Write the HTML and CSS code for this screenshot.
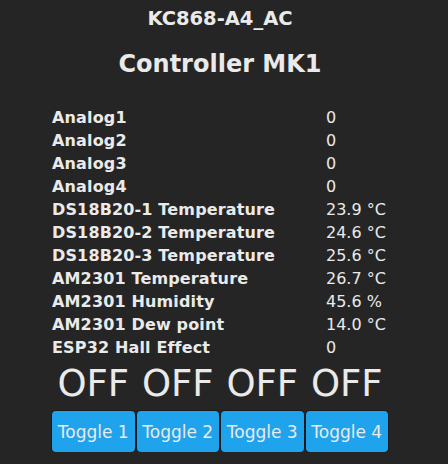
FILE: index.html
```html
<!DOCTYPE html>
<html>
<head>
<meta charset="utf-8">
<link rel="stylesheet" href="styles.css">
</head>
<body>
<div class="page">
  <h3 class="device">KC868-A4_AC</h3>
  <h2 class="title">Controller MK1</h2>
  <div class="sensors">
    <div class="row"><span class="label">Analog1</span><span class="value">0</span></div>
    <div class="row"><span class="label">Analog2</span><span class="value">0</span></div>
    <div class="row"><span class="label">Analog3</span><span class="value">0</span></div>
    <div class="row"><span class="label">Analog4</span><span class="value">0</span></div>
    <div class="row"><span class="label">DS18B20-1 Temperature</span><span class="value">23.9 °C</span></div>
    <div class="row"><span class="label">DS18B20-2 Temperature</span><span class="value">24.6 °C</span></div>
    <div class="row"><span class="label">DS18B20-3 Temperature</span><span class="value">25.6 °C</span></div>
    <div class="row"><span class="label">AM2301 Temperature</span><span class="value">26.7 °C</span></div>
    <div class="row"><span class="label">AM2301 Humidity</span><span class="value">45.6 %</span></div>
    <div class="row"><span class="label">AM2301 Dew point</span><span class="value">14.0 °C</span></div>
    <div class="row"><span class="label">ESP32 Hall Effect</span><span class="value">0</span></div>
  </div>
  <div class="states">
    <div class="state">OFF</div>
    <div class="state">OFF</div>
    <div class="state">OFF</div>
    <div class="state">OFF</div>
  </div>
  <div class="buttons">
    <button class="btn">Toggle 1</button>
    <button class="btn">Toggle 2</button>
    <button class="btn">Toggle 3</button>
    <button class="btn">Toggle 4</button>
  </div>
</div>
</body>
</html>
```
FILE: styles.css
```css
html, body {
  margin: 0;
  padding: 0;
  background: #252525;
}
body {
  color: #eaeaea;
  font-family: "DejaVu Sans", Verdana, sans-serif;
}
.page {
  width: 336px;
  margin-left: 52px;
  padding-top: 7px;
}
.device {
  margin: 0;
  text-align: center;
  font-size: 19.5px;
  line-height: 24px;
  font-weight: bold;
}
.title {
  margin: 18px 0 0;
  text-align: center;
  font-size: 24px;
  line-height: 30px;
  font-weight: bold;
}
.sensors {
  margin-top: 27px;
}
.row {
  display: flex;
  font-size: 16px;
  line-height: 23px;
}
.label {
  width: 274px;
  font-weight: bold;
  letter-spacing: 0.15px;
}
.value {
  font-weight: normal;
}
.states {
  margin-top: 5px;
  display: grid;
  grid-template-columns: repeat(4, 1fr);
  gap: 2px;
}
.state {
  text-align: center;
  font-size: 37px;
  line-height: 40px;
}
.buttons {
  margin-top: 7px;
  display: grid;
  grid-template-columns: repeat(4, 1fr);
  gap: 2px;
}
.btn {
  height: 41px;
  padding: 0;
  border: 0;
  border-radius: 4px;
  background: #1fa3ec;
  color: #eaeaea;
  font-family: "DejaVu Sans", Verdana, sans-serif;
  font-size: 17px;
  box-shadow: 0 0 0 1px #1a1a1a;
}
```
